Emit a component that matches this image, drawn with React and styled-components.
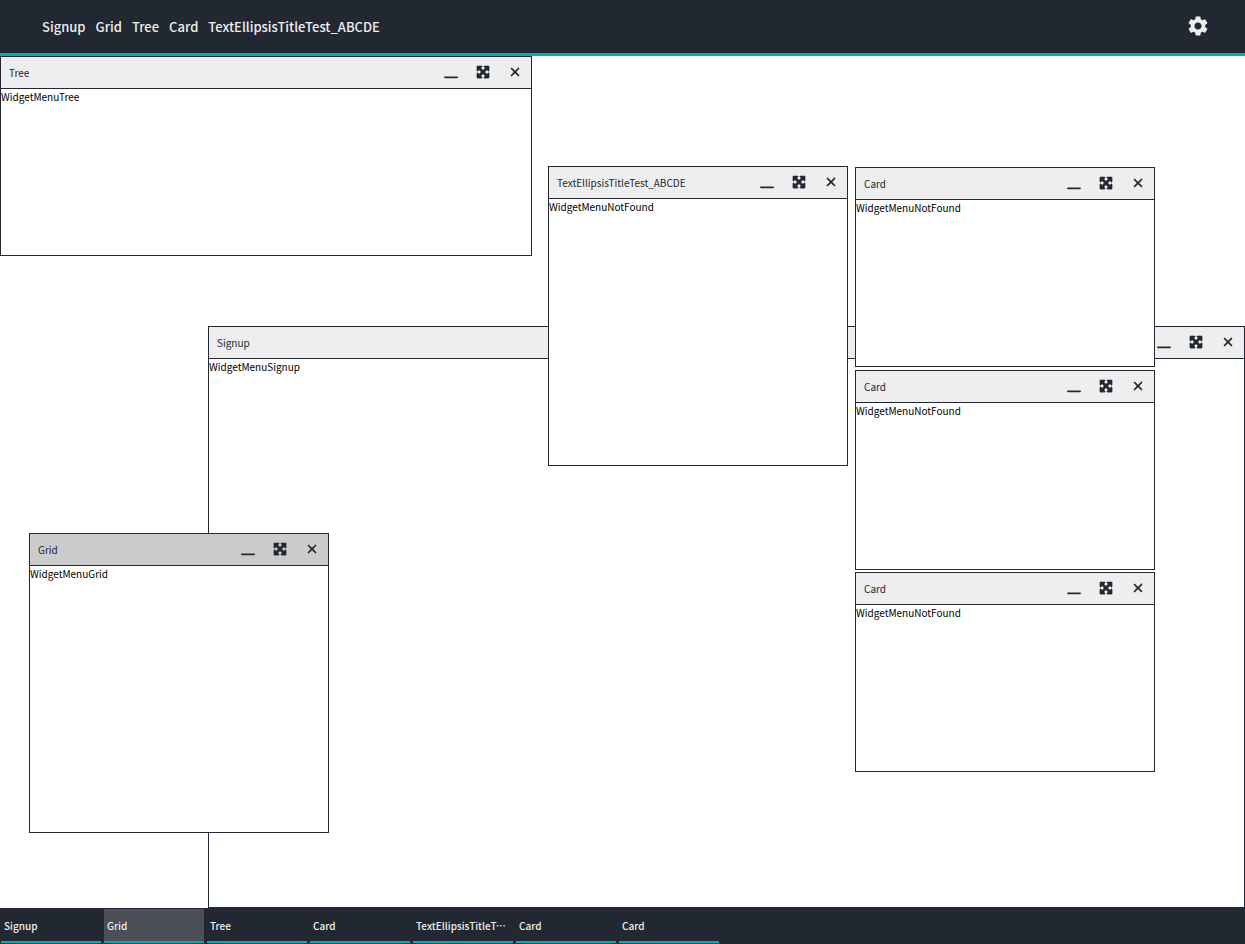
import React from "react";
import styled, { createGlobalStyle } from "styled-components";
import { MdSettings } from "react-icons/md";
import { FaMaximize, FaWindowMinimize, FaXmark } from "react-icons/fa6";

const color = {
  dark: "#222831",
  accent: "#00adb5",
  light: "#eeeeee",
  focus: "#cccccc",
};

const GlobalStyle = createGlobalStyle`
  *, *::before, *::after { box-sizing: border-box; }
  body {
    margin: 0;
    background: #ffffff;
    color: #000000;
    font-family: "Noto Sans CJK KR", "Noto Sans", sans-serif;
    font-size: 10px;
    line-height: 16px;
  }
  button { font: inherit; color: inherit; background: none; border: 0; padding: 0; cursor: pointer; }
`;

const Page = styled.div`
  display: flex;
  flex-direction: column;
  min-height: 100vh;
`;

const Header = styled.header`
  display: flex;
  align-items: center;
  justify-content: space-between;
  height: 56px;
  padding: 0 35px 0 42px;
  background: ${color.dark};
  border-bottom: 3px solid ${color.accent};
  color: ${color.light};
`;

const Menu = styled.nav`
  display: flex;
  gap: 10px;
  padding-top: 1px;
`;

const MenuButton = styled.button`
  font-size: 13px;
  font-weight: 500;
  line-height: 20px;
`;

const IconButton = styled.button`
  display: flex;
  align-items: center;
  justify-content: center;
  padding-bottom: 1px;
`;

const Desktop = styled.main`
  position: relative;
  flex: 1;
  overflow: hidden;
`;

const Window = styled.section`
  position: absolute;
  left: ${(p) => p.$x}px;
  top: ${(p) => p.$y}px;
  ${(p) => (p.$w ? `width: ${p.$w}px;` : "right: 0;")}
  ${(p) => (p.$h ? `height: ${p.$h}px;` : "bottom: 0;")}
  background: #ffffff;
  border: 1px solid ${color.dark};
`;

const TitleBar = styled.header`
  display: flex;
  align-items: center;
  justify-content: space-between;
  height: 32px;
  padding-left: 8px;
  background: ${(p) => (p.$active ? color.focus : color.light)};
  border-bottom: 1px solid ${color.dark};
  color: ${color.dark};
`;

const Title = styled.h2`
  margin: 0;
  font-size: 10px;
  font-weight: 400;
`;

const Controls = styled.div`
  display: flex;

  ${IconButton} {
    width: 32px;
    height: 31px;
  }
`;

const MaximizeIcon = styled(FaMaximize)`
  stroke: currentColor;
  stroke-width: 16px;
  overflow: visible;
`;

const Content = styled.p`
  margin: 0;
`;

const TaskBar = styled.footer`
  display: flex;
  gap: 3px;
  height: 36px;
  padding: 1px;
  background: ${color.dark};
  color: ${color.light};
`;

const Task = styled.button`
  && {
    width: 100px;
    padding: 2px 3px 0;
    overflow: hidden;
    text-align: left;
    text-overflow: ellipsis;
    white-space: nowrap;
    font-weight: 500;
    background: ${(p) => (p.$active ? "#4b4f57" : "transparent")};
    border-bottom: 2px solid ${color.accent};
  }
`;

const LONG_NAME = "TextEllipsisTitleTest_ABCDE";
const menus = ["Signup", "Grid", "Tree", "Card", LONG_NAME];

const windows = [
  { name: "Signup", text: "WidgetMenuSignup", x: 208, y: 270 },
  { name: "Grid", text: "WidgetMenuGrid", x: 29, y: 477, w: 300, h: 300, active: true },
  { name: "Tree", text: "WidgetMenuTree", x: 0, y: 0, w: 532, h: 200 },
  { name: "Card", text: "WidgetMenuNotFound", x: 855, y: 111, w: 300, h: 200 },
  { name: LONG_NAME, text: "WidgetMenuNotFound", x: 548, y: 110, w: 300, h: 300 },
  { name: "Card", text: "WidgetMenuNotFound", x: 855, y: 314, w: 300, h: 200 },
  { name: "Card", text: "WidgetMenuNotFound", x: 855, y: 516, w: 300, h: 200 },
];

export default function App() {
  return (
    <Page>
      <GlobalStyle />
      <Header>
        <Menu>
          {menus.map((name) => (
            <MenuButton key={name} type="button">{name}</MenuButton>
          ))}
        </Menu>
        <IconButton type="button" aria-label="Settings">
          <MdSettings size={24} />
        </IconButton>
      </Header>
      <Desktop>
        {windows.map((w, i) => (
          <Window key={i} $x={w.x} $y={w.y} $w={w.w} $h={w.h}>
            <TitleBar $active={w.active}>
              <Title>{w.name}</Title>
              <Controls>
                <IconButton type="button" aria-label="Minimize">
                  <FaWindowMinimize size={14} />
                </IconButton>
                <IconButton type="button" aria-label="Maximize">
                  <MaximizeIcon size={14} />
                </IconButton>
                <IconButton type="button" aria-label="Close">
                  <FaXmark size={14} />
                </IconButton>
              </Controls>
            </TitleBar>
            <Content>{w.text}</Content>
          </Window>
        ))}
      </Desktop>
      <TaskBar>
        {windows.map((w, i) => (
          <Task key={i} type="button" $active={w.active}>{w.name}</Task>
        ))}
      </TaskBar>
    </Page>
  );
}
